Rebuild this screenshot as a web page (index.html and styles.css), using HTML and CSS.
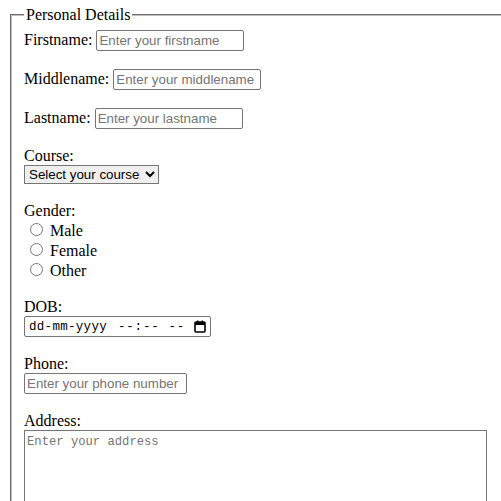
FILE: index.html
```html
<!DOCTYPE html>
<html>
<head>
<meta charset="utf-8">
<title>Registration</title>
<link rel="stylesheet" href="styles.css">
</head>
<body class="page">
<form class="form">
<fieldset class="details">
<legend class="legend">Personal Details</legend>
<label class="lbl">Firstname:</label> <input class="txt" type="text" placeholder="Enter your firstname"><br><br>
<label class="lbl">Middlename:</label> <input class="txt" type="text" placeholder="Enter your middlename"><br><br>
<label class="lbl">Lastname:</label> <input class="txt" type="text" placeholder="Enter your lastname"><br><br>
<label class="lbl">Course:</label><br>
<select class="sel"><option>Select your course</option><option>BCA</option><option>BBA</option></select><br><br>
<label class="lbl">Gender:</label><br>
<input class="radio" type="radio" name="g"> <span class="lbl">Male</span><br>
<input class="radio" type="radio" name="g"> <span class="lbl">Female</span><br>
<input class="radio" type="radio" name="g"> <span class="lbl">Other</span><br><br>
<label class="lbl">DOB:</label><br>
<span class="date"><span class="date-text"><span>dd-mm-yyyy</span><span class="seg">--:--</span><span class="seg2">--</span></span><svg class="cal" width="12" height="13" viewBox="0 0 12 13"><rect x="1" y="2" width="10" height="10" rx="1" fill="none" stroke="#000" stroke-width="1.6"/><rect x="1" y="2" width="10" height="3" fill="#000"/><rect x="3" y="0.5" width="1.5" height="2" fill="#000"/><rect x="7.5" y="0.5" width="1.5" height="2" fill="#000"/></svg></span><br><br>
<label class="lbl">Phone:</label><br>
<input class="txt phone" type="tel" placeholder="Enter your phone number"><br><br>
<label class="lbl">Address:</label><br>
<textarea class="addr" placeholder="Enter your address"></textarea>
</fieldset>
</form>
</body>
</html>
```
FILE: styles.css
```css
html, body { overflow: hidden; }
.page {
  margin: 6px 8px 8px 8px;
  font-family: "Liberation Serif", serif;
  font-size: 16px;
  width: 530px;
}
.form { margin: 0; }
.details {
  margin: 0 2px;
  padding: 6px 12px 10px 12px;
  border: 2px groove #c0c0c0;
}
.legend { padding: 0 2px; }
.lbl { font-family: "Liberation Serif", serif; }
.txt {
  font-family: "Liberation Sans", sans-serif;
  font-size: 13.33px;
  width: 142px;
  height: 17px;
  padding: 1px 2px;
  border: 1px solid #767676;
  border-radius: 2px;
  box-sizing: content-box;
}
.txt::placeholder { color: #757575; }
.phone { width: 157px; }
.sel {
  font-family: "Liberation Sans", sans-serif;
  font-size: 13.33px;
  width: 135px;
  height: 19px;
  border: 1px solid #767676;
  border-radius: 0;
}
.radio { margin: 3px 3px 0 6px; }
.date {
  display: inline-flex;
  align-items: center;
  justify-content: space-between;
  width: 177px;
  height: 17px;
  padding: 1px 4px;
  border: 1px solid #767676;
  border-radius: 2px;
  vertical-align: bottom;
}
.date-text {
  font-family: "Liberation Mono", monospace;
  font-size: 12.5px;
  color: #000;
  white-space: pre;
  letter-spacing: 0.3px;
}
.seg { margin-left: 11px; letter-spacing: 0.8px; }
.seg2 { margin-left: 9px; letter-spacing: 0.8px; }
.cal { display: block; }
.addr {
  display: block;
  width: 463px;
  height: 120px;
  box-sizing: border-box;
  font-family: "Liberation Mono", monospace;
  font-size: 12.2px;
  padding: 4px 2px 2px 2px;
  border: 1px solid #767676;
  resize: none;
}
.addr::placeholder { color: #757575; }
```
